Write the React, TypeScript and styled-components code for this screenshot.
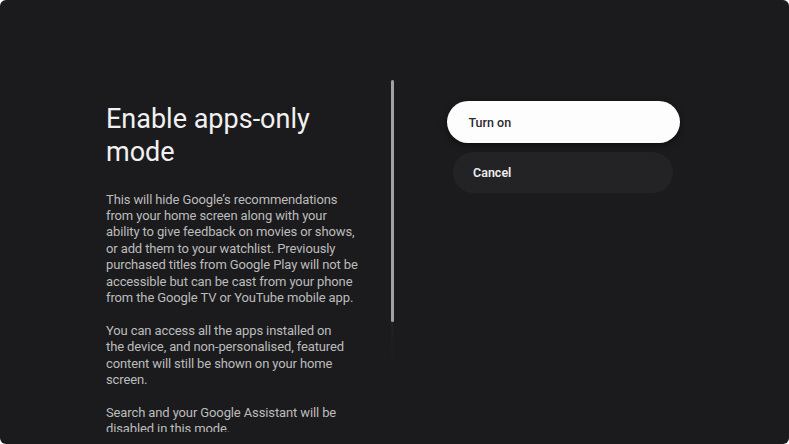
import React from 'react';
import styled, { createGlobalStyle } from 'styled-components';

const GlobalStyle = createGlobalStyle`
  html, body {
    margin: 0;
    padding: 0;
    background: #ffffff;
  }
  * {
    box-sizing: border-box;
  }
`;

// line breaks kept as on the TV screen
const paragraphs = [
  [
    'This will hide Google’s recommendations',
    'from your home screen along with your',
    'ability to give feedback on movies or shows,',
    'or add them to your watchlist. Previously',
    'purchased titles from Google Play will not be',
    'accessible but can be cast from your phone',
    'from the Google TV or YouTube mobile app.',
  ],
  [
    'You can access all the apps installed on',
    'the device, and non-personalised, featured',
    'content will still be shown on your home',
    'screen.',
  ],
  ['Search and your Google Assistant will be', 'disabled in this mode.'],
];

const App = () => {
  return (
    <>
      <GlobalStyle />
      <Screen>
        <InfoPane>
          <Title>Enable apps-only mode</Title>
          {paragraphs.map((lines, i) => (
            <Body key={i}>
              {lines.map((line) => (
                <Line key={line}>{line}</Line>
              ))}
            </Body>
          ))}
        </InfoPane>
        <ScrollTrack>
          <ScrollThumb />
        </ScrollTrack>
        <Actions>
          <ActionButton focused>Turn on</ActionButton>
          <ActionButton>Cancel</ActionButton>
        </Actions>
      </Screen>
    </>
  );
};

const Screen = styled.div`
  width: 789px;
  height: 444px;
  background: #1b1b1d;
  border-radius: 6px;
  overflow: hidden;
  display: flex;
  align-items: flex-start;
  font-family: Roboto, 'Noto Sans', sans-serif;
`;

// the dialog text is cut off at the bottom, like on the TV
const InfoPane = styled.div`
  width: 391px;
  height: 432px;
  overflow: hidden;
  padding: 103px 20px 0 106px;
  display: flex;
  flex-direction: column;
  gap: 16.5px;
`;

const Title = styled.h1`
  margin: 0 0 6px;
  width: 240px;
  font-size: 27px;
  line-height: 33px;
  font-weight: 400;
  color: #f1f1f1;
`;

const Body = styled.p`
  margin: 0;
  font-size: 13px;
  line-height: 16.4px;
  letter-spacing: -0.12px;
  color: #bcbcbc;
`;

const Line = styled.span`
  display: block;
  white-space: nowrap;
`;

const ScrollTrack = styled.div`
  width: 3px;
  margin-top: 80px;
  height: 290px;
  border-radius: 2px;
  background: linear-gradient(#3a3a3c, #1b1b1d);
  display: flex;
  flex-direction: column;
`;

const ScrollThumb = styled.div`
  height: 242px;
  border-radius: 2px;
  background: #a2a2a2;
`;

const Actions = styled.div`
  padding: 101px 0 0 51px;
  display: flex;
  flex-direction: column;
  align-items: center;
  gap: 9px;
  width: 287px;
`;

const ActionButton = styled.div<{ focused?: boolean }>`
  width: ${(p) => (p.focused ? '233px' : '220px')};
  height: ${(p) => (p.focused ? '42px' : '41px')};
  border-radius: 21px;
  display: flex;
  align-items: center;
  padding-left: ${(p) => (p.focused ? '22px' : '20px')};
  font-size: 12.5px;
  font-weight: ${(p) => (p.focused ? 500 : 600)};
  background: ${(p) => (p.focused ? '#fdfdfd' : '#232325')};
  color: ${(p) => (p.focused ? '#2b2b2d' : '#eeeeee')};
  box-shadow: ${(p) => (p.focused ? '0 2px 6px rgba(0, 0, 0, 0.5)' : 'none')};
`;

export default App;
